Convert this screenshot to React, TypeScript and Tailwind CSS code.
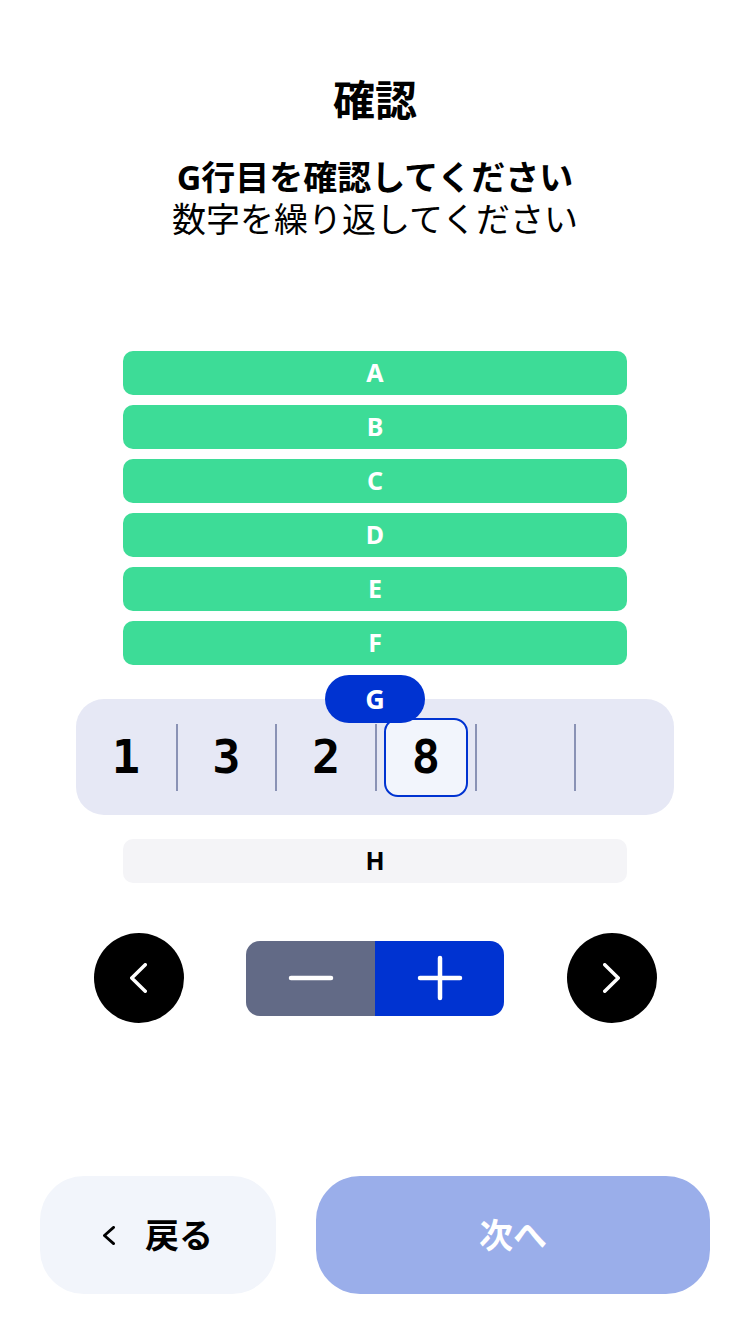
const rows = ['A', 'B', 'C', 'D', 'E', 'F'];
const digits = ['1', '3', '2', '8', '', ''];
const active = 3;
const mono = { fontFamily: '"DejaVu Sans Mono", monospace' };

function Chevron({ dir, w, h, stroke }: { dir: 'left' | 'right'; w: number; h: number; stroke: number }) {
  const s = stroke / 2;
  const d =
    dir === 'left'
      ? `M${w - s} ${s} L${s} ${h / 2} L${w - s} ${h - s}`
      : `M${s} ${s} L${w - s} ${h / 2} L${s} ${h - s}`;
  return (
    <svg width={w} height={h} viewBox={`0 0 ${w} ${h}`} fill="none">
      <path d={d} stroke="currentColor" strokeWidth={stroke} strokeLinecap="round" strokeLinejoin="round" />
    </svg>
  );
}

export default function App() {
  return (
    <div
      className="flex h-[1334px] w-[750px] flex-col items-center bg-white text-black"
      style={{ fontFamily: '"Noto Sans", "Noto Sans CJK JP", sans-serif' }}
    >
      <h1 className="mt-[72px] h-[56px] text-[42px] leading-[56px] font-bold">確認</h1>
      <div className="mt-[28px] flex flex-col items-center">
        <p className="text-[34px] leading-[42px] font-bold">G行目を確認してください</p>
        <p className="text-[34px] leading-[42px]">数字を繰り返してください</p>
      </div>

      <div className="mt-[111px] flex w-[504px] flex-col gap-[10px]">
        {rows.map((r) => (
          <div
            key={r}
            className="flex h-[44px] items-center justify-center rounded-[10px] bg-[#3ddc97] text-[25px] font-bold text-white"
          >
            {r}
          </div>
        ))}
      </div>

      <div className="relative mt-[34px] w-[598px]">
        <div className="absolute top-[-24px] left-[249px] z-10 flex h-[48px] w-[100px] items-center justify-center rounded-full bg-[#0033d1] text-[27px] font-bold text-white">
          G
        </div>
        <div className="flex h-[116px] items-center rounded-[28px] bg-[#e6e8f5]">
          {digits.map((d, i) => (
            <div key={i} className="flex h-full flex-1 items-center">
              {i > 0 && <div className="h-[67px] w-[2px] bg-[#8a92b5]" />}
              <div className="flex h-full flex-1 items-center justify-center">
                {i === active ? (
                  <div
                    className="flex h-[79px] w-[84px] items-center justify-center rounded-[14px] border-2 border-[#0033d1] bg-[#f2f5fc] text-[47px] font-bold"
                    style={mono}
                  >
                    {d}
                  </div>
                ) : (
                  <span className="text-[47px] font-bold" style={mono}>
                    {d}
                  </span>
                )}
              </div>
            </div>
          ))}
        </div>
      </div>

      <div className="mt-[24px] flex h-[44px] w-[504px] items-center justify-center rounded-[10px] bg-[#f4f4f7] text-[25px] font-bold">
        H
      </div>

      <div className="mt-[50px] flex w-[563px] items-center justify-between">
        <button className="flex h-[90px] w-[90px] items-center justify-center rounded-full bg-black text-white">
          <Chevron dir="left" w={17} h={30} stroke={3.5} />
        </button>
        <div className="flex h-[75px] w-[258px] overflow-hidden rounded-[14px]">
          <div className="flex flex-1 items-center justify-center bg-[#626a86] text-white">
            <svg width="46" height="46" viewBox="0 0 46 46">
              <path d="M3 23 H43" stroke="currentColor" strokeWidth="4.5" strokeLinecap="round" />
            </svg>
          </div>
          <div className="flex flex-1 items-center justify-center bg-[#0033d1] text-white">
            <svg width="46" height="46" viewBox="0 0 46 46">
              <path d="M3 23 H43 M23 3 V43" stroke="currentColor" strokeWidth="4.5" strokeLinecap="round" />
            </svg>
          </div>
        </div>
        <button className="flex h-[90px] w-[90px] items-center justify-center rounded-full bg-black text-white">
          <Chevron dir="right" w={17} h={30} stroke={3.5} />
        </button>
      </div>

      <div className="mt-auto mb-[40px] flex w-[670px] gap-[40px]">
        <button className="flex h-[118px] w-[236px] items-center justify-center gap-[30px] rounded-[44px] bg-[#f2f5fb] text-[34px] font-bold">
          <Chevron dir="left" w={12} h={19} stroke={2.8} />
          <span>戻る</span>
        </button>
        <button className="flex h-[118px] flex-1 items-center justify-center rounded-[44px] bg-[#9aaeea] text-[34px] font-bold text-white">
          次へ
        </button>
      </div>
    </div>
  );
}
